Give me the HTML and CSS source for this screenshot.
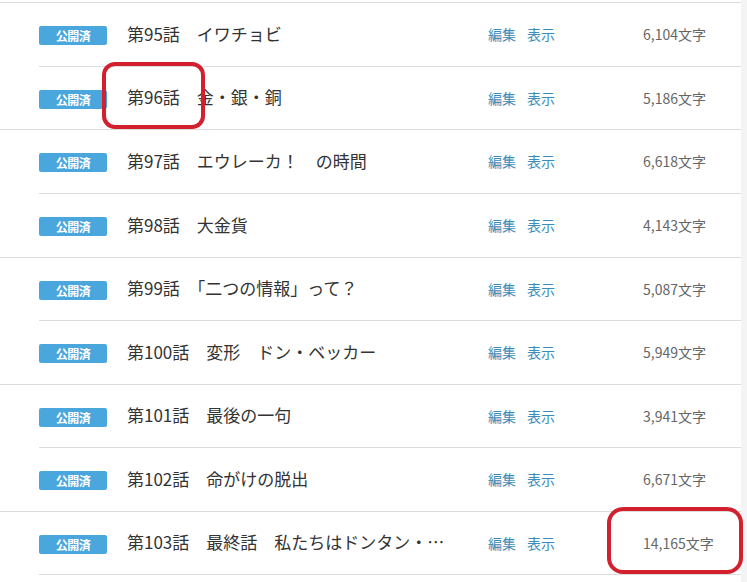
FILE: index.html
```html
<!DOCTYPE html>
<html lang="ja">
<head>
<meta charset="utf-8">
<link rel="stylesheet" href="styles.css">
</head>
<body>
<div class="page">
  <div class="list">
    <div class="row"><span class="badge">公開済</span><span class="title">第95話　イワチョビ</span><span class="actions"><a>編集</a><a>表示</a></span><span class="count">6,104文字</span></div>
    <div class="row short"><span class="badge">公開済</span><span class="title">第96話　金・銀・銅</span><span class="actions"><a>編集</a><a>表示</a></span><span class="count">5,186文字</span></div>
    <div class="row"><span class="badge">公開済</span><span class="title">第97話　エウレーカ！　の時間</span><span class="actions"><a>編集</a><a>表示</a></span><span class="count">6,618文字</span></div>
    <div class="row"><span class="badge">公開済</span><span class="title">第98話　大金貨</span><span class="actions"><a>編集</a><a>表示</a></span><span class="count">4,143文字</span></div>
    <div class="row short"><span class="badge">公開済</span><span class="title">第99話　「二つの情報」って？</span><span class="actions"><a>編集</a><a>表示</a></span><span class="count">5,087文字</span></div>
    <div class="row"><span class="badge">公開済</span><span class="title">第100話　変形　ドン・ベッカー</span><span class="actions"><a>編集</a><a>表示</a></span><span class="count">5,949文字</span></div>
    <div class="row short"><span class="badge">公開済</span><span class="title">第101話　最後の一句</span><span class="actions"><a>編集</a><a>表示</a></span><span class="count">3,941文字</span></div>
    <div class="row"><span class="badge">公開済</span><span class="title">第102話　命がけの脱出</span><span class="actions"><a>編集</a><a>表示</a></span><span class="count">6,671文字</span></div>
    <div class="row short"><span class="badge">公開済</span><span class="title">第103話　最終話　私たちはドンタン・…</span><span class="actions"><a>編集</a><a>表示</a></span><span class="count">14,165文字</span></div>
  </div>
  <div class="strip"></div>
  <div class="mark mark-title"></div>
  <div class="mark mark-count"></div>
</div>
</body>
</html>
```
FILE: styles.css
```css
html, body {
  margin: 0;
  padding: 0;
  background: #fff;
}
.page {
  position: relative;
  display: flex;
  width: 747px;
  height: 582px;
  overflow: hidden;
  font-family: "Noto Sans CJK JP", "Noto Sans", sans-serif;
}
.list {
  flex: 1;
  margin-top: 2px;
  border-top: 1px solid #dcdcdc;
  align-self: flex-start;
}
.strip {
  width: 6px;
  background: #f4f4f4;
}
.row {
  display: flex;
  align-items: center;
  height: 63px;
  border-bottom: 1px solid #dcdcdc;
}
.row.short {
  height: 62px;
}
.row:nth-child(odd) {
  margin-left: 39px;
}
.row:nth-child(even) {
  padding-left: 39px;
}
.badge {
  flex: none;
  width: 68px;
  height: 19px;
  margin-top: 2px;
  background: #4aa7dd;
  border-radius: 2px;
  color: #fff;
  font-size: 12px;
  font-weight: 700;
  line-height: 19px;
  text-align: center;
  letter-spacing: -0.5px;
}
.title {
  flex: none;
  width: 361px;
  margin-left: 20px;
  margin-bottom: 3px;
  font-size: 17px;
  color: #333;
  white-space: nowrap;
  overflow: hidden;
}
.actions {
  flex: none;
  width: 155px;
  display: flex;
  gap: 11px;
  margin-bottom: 1px;
  font-size: 14px;
  color: #3a8db8;
}
.count {
  font-size: 14px;
  color: #666;
  white-space: nowrap;
  margin-bottom: 1px;
}
.mark {
  position: absolute;
  border: 4px solid #d3202e;
  border-radius: 13px;
  box-sizing: border-box;
}
.mark-title {
  left: 102px;
  top: 62px;
  width: 103px;
  height: 67px;
}
.mark-count {
  left: 607px;
  top: 507px;
  width: 136px;
  height: 67px;
  border-radius: 16px;
}
```
